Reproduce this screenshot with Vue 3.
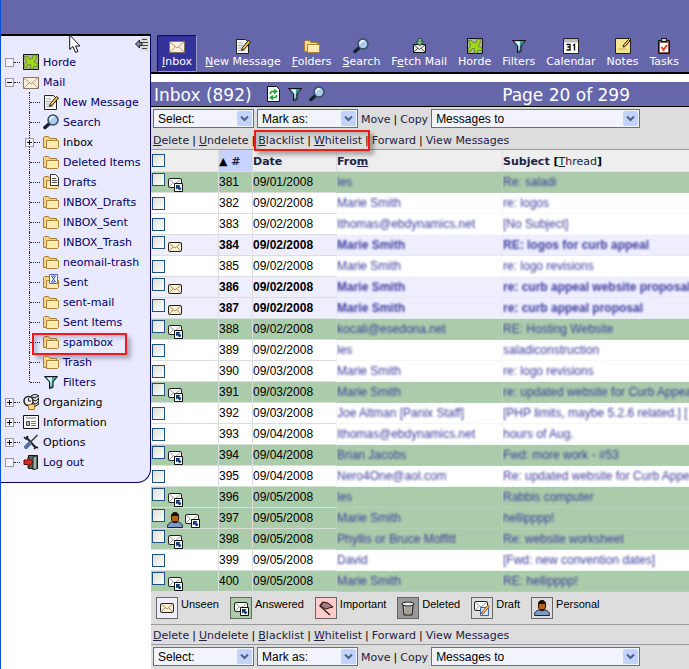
<script setup>
import { ref } from 'vue'

const tools = [
  { key: 'I', rest: 'nbox', icon: 'mail', active: true },
  { key: 'N', rest: 'ew Message', icon: 'compose' },
  { key: 'F', rest: 'olders', icon: 'folder' },
  { key: 'S', rest: 'earch', icon: 'search' },
  { pre: 'F', key: 'e', rest: 'tch Mail', icon: 'fetch' },
  { rest: 'Horde', icon: 'horde' },
  { rest: 'Filters', icon: 'filter' },
  { rest: 'Calendar', icon: 'calendar' },
  { rest: 'Notes', icon: 'note' },
  { rest: 'Tasks', icon: 'task' }
]

const tree = [
  { label: 'Horde', icon: 'horde', toggle: 'none' },
  { label: 'Mail', icon: 'mail', toggle: 'minus' },
  { label: 'New Message', icon: 'compose', child: true },
  { label: 'Search', icon: 'search', child: true },
  { label: 'Inbox', icon: 'folder', child: true, toggle: 'plus', dark: true },
  { label: 'Deleted Items', icon: 'folder', child: true },
  { label: 'Drafts', icon: 'drafts', child: true },
  { label: 'INBOX_Drafts', icon: 'folder', child: true },
  { label: 'INBOX_Sent', icon: 'folder', child: true },
  { label: 'INBOX_Trash', icon: 'folder', child: true },
  { label: 'neomail-trash', icon: 'folder', child: true },
  { label: 'Sent', icon: 'sent', child: true },
  { label: 'sent-mail', icon: 'folder', child: true },
  { label: 'Sent Items', icon: 'folder', child: true },
  { label: 'spambox', icon: 'folder', child: true, marked: true },
  { label: 'Trash', icon: 'folder', child: true },
  { label: 'Filters', icon: 'filter', child: true, last: true },
  { label: 'Organizing', icon: 'organize', toggle: 'plus', dark: true },
  { label: 'Information', icon: 'info', toggle: 'plus', dark: true },
  { label: 'Options', icon: 'options', toggle: 'plus', dark: true },
  { label: 'Log out', icon: 'logout', toggle: 'none' }
]

const row = (n, date, from, subject, kind = '', icons = []) => ({ n, date: `09/${date}/2008`, from, subject, kind, icons })
const a = ['answered']
const u = ['unseen']
const messages = ref([
  row(381, '01', 'les', 'Re: saladi', 'answered', a),
  row(382, '02', 'Marie Smith', 're: logos'),
  row(383, '02', 'lthomas@ebdynamics.net', '[No Subject]'),
  row(384, '02', 'Marie Smith', 'RE: logos for curb appeal', 'unseen', u),
  row(385, '02', 'Marie Smith', 're: logo revisions'),
  row(386, '02', 'Marie Smith', 're: curb appeal website proposal', 'unseen', u),
  row(387, '02', 'Marie Smith', 're: curb appeal proposal', 'unseen', u),
  row(388, '02', 'kocali@esedona.net', 'RE: Hosting Website', 'answered', a),
  row(389, '02', 'les', 'saladiconstruction'),
  row(390, '03', 'Marie Smith', 're: logo revisions'),
  row(391, '03', 'Marie Smith', 're: updated website for Curb Appeal', 'answered', a),
  row(392, '03', 'Joe Altman [Panix Staff]', '[PHP limits, maybe 5.2.6 related.] ['),
  row(393, '04', 'lthomas@ebdynamics.net', 'hours of Aug.'),
  row(394, '04', 'Brian Jacobs', 'Fwd: more work - #53', 'answered', a),
  row(395, '04', 'Nero4One@aol.com', 'Re: updated website for Curb Appeal'),
  row(396, '05', 'les', 'Rabbis computer', 'answered', a),
  row(397, '05', 'Marie Smith', 'hellipppp!', 'answered', ['person', 'answered']),
  row(398, '05', 'Phyllis or Bruce Moffitt', 'Re: website worksheet', 'answered', a),
  row(399, '05', 'David', '[Fwd: new convention dates]'),
  row(400, '05', 'Marie Smith', 'RE: hellipppp!', 'answered', a)
])

const legend = [
  { label: 'Unseen', icon: 'unseen' },
  { label: 'Answered', icon: 'answered' },
  { label: 'Important', icon: 'important' },
  { label: 'Deleted', icon: 'deleted' },
  { label: 'Draft', icon: 'draft' },
  { label: 'Personal', icon: 'person' }
]
</script>

<template>
  <svg class="sprites" aria-hidden="true">
    <symbol id="mail" viewBox="0 0 16 16">
      <path d="M.5 3.500h15v11H.5z" fill="#fbeedd" stroke="#8a7260" />
      <path d="M1 4l7 6 7-6M1 14l5-5M15 14l-5-5" fill="none" stroke="#b59a80" />
    </symbol>
    <symbol id="compose" viewBox="0 0 16 16">
      <path d="M1.500 1.500h9l3 3v11h-12z" fill="#f6f6f6" stroke="#222" />
      <path d="M3 5h5M3 7.500h5M3 10h4M3 12.500h7" stroke="#aaa" />
      <path d="M13.500 2.500l2 1.500-6 7-3 1.500 1-3z" fill="#ffc83a" stroke="#111" />
    </symbol>
    <symbol id="search" viewBox="0 0 16 16">
      <path d="M6.500 9.500L2 13.500" stroke="#16202c" stroke-width="3.500" stroke-linecap="round" />
      <circle cx="10" cy="6" r="5" fill="#a9cdec" stroke="#3c4a5c" stroke-width="1.500" />
      <path d="M7 6a3 3 0 0 1 4-3" fill="none" stroke="#f4fbff" stroke-width="1.500" />
    </symbol>
    <symbol id="folder" viewBox="0 0 16 16">
      <path d="M.5 13.500v-10l1-1h4l1.500 2h6.500v9z" fill="#f3d68a" stroke="#a87a32" />
      <path d="M3.500 6.500h12v7l-1 1h-11z" fill="#ffebb0" stroke="#b08238" />
      <path d="M4.500 7.500h10" stroke="#fffbe6" />
    </symbol>
    <symbol id="drafts" viewBox="0 0 16 16">
      <use href="#folder" />
      <path d="M7.500.500h5l3 3v8h-8z" fill="#fff" stroke="#333" />
      <path d="M9 4.500h4M9 6.500h5M9 8.500h5" stroke="#555" />
    </symbol>
    <symbol id="sent" viewBox="0 0 16 16">
      <use href="#folder" />
      <path d="M6.500.500h8v9h-8z" fill="#fff" stroke="#5a62c8" />
      <path d="M8.500 2l4 6M12.500 2l-4 6M8.500 2h4M8.500 8h4" fill="none" stroke="#4650b8" />
    </symbol>
    <symbol id="fetch" viewBox="0 0 16 16">
      <path d="M2.500 6.500h12v8h-12z" fill="#eee" stroke="#111" />
      <path d="M3 7l5.500 4.500L14 7M3 14l4-4M14 14l-4-4" fill="none" stroke="#555" />
      <path d="M7 .500h3.500v3h2L8.700 8 5 3.500h2z" fill="#79b58a" stroke="#245a38" />
    </symbol>
    <symbol id="horde" viewBox="0 0 16 16">
      <path d="M.5.500h15v15H.5z" fill="#b4b2a2" stroke="#111" />
      <path d="M1 3l3-1 2 2.500L9 5l1.500-4h3L13 5l-2 3 4 2v3l-4-1-1 3H7l1-4-3-.5-1.500 3L1 13v-2l2.500-3L3 5.500z" fill="#9bdc16" stroke="#50701c" stroke-width=".7" />
    </symbol>
    <symbol id="filter" viewBox="0 0 16 16">
      <path d="M1.500 2.500h13L10 8v5.500l-3.500 1V8z" fill="#3f9ba0" stroke="#111" />
      <path d="M4 3.500h5l-.5 8-1 .5V8z" fill="#e8ffff" />
    </symbol>
    <symbol id="calendar" viewBox="0 0 16 16">
      <path d="M.5.500h15v15H.5z" fill="#fff" stroke="#222" />
      <path d="M1 1h14v3.500H1z" fill="#bbb" />
      <path d="M3.500 6.500h3.500v5.500H3.500M4.500 9h2.500M10 7.500l1.500-1v6" fill="none" stroke="#111" stroke-width="1.400" />
    </symbol>
    <symbol id="note" viewBox="0 0 16 16">
      <path d="M.5.500h15v15H.5z" fill="#f4e68c" stroke="#222" />
      <path d="M13.500 1.500l1.500 1.500-5 5.500-2 .5.500-2z" fill="#ffc93a" stroke="#222" />
      <path d="M3 11h8" stroke="#c8b658" />
    </symbol>
    <symbol id="task" viewBox="0 0 16 16">
      <path d="M2.500 2.500h11v13h-11z" fill="#8b5a4a" stroke="#111" />
      <path d="M4 5h8v9H4z" fill="#fff" />
      <path d="M5.500.500h5v3h-5z" fill="#ccc" stroke="#111" />
      <path d="M5.500 9l2 3 3.500-5" fill="none" stroke="#e0402c" stroke-width="2" />
    </symbol>
    <symbol id="refresh" viewBox="0 0 16 16">
      <path d="M2.500.500h9l3 3v12h-12z" fill="#f2fff2" stroke="#111" />
      <path d="M5.500 8V6.500l1-1H11M9 3.500l2.500 2L9 7.500M11.500 9v1.500l-1 1H6M8 9.500l-2.500 2 2.500 2" fill="none" stroke="#17a233" stroke-width="1.600" />
    </symbol>
    <symbol id="organize" viewBox="0 0 16 16">
      <path d="M8 2l4-2 4 2v2l-1 1 1 1-1 2 1 2-5 3-4-2z" fill="#ddd" stroke="#111" />
      <path d="M9 3l3 1 3-2M10 6l3 1 2-2M10 9l3 1 2-2" fill="none" stroke="#222" />
      <circle cx="5.500" cy="7" r="4.500" fill="#eee" stroke="#222" stroke-width="1.500" />
      <path d="M5.500 4v3H8" fill="none" stroke="#222" />
      <path d="M5.500 10.500h6v5h-6z" fill="#ffd87a" stroke="#a4752a" />
    </symbol>
    <symbol id="info" viewBox="0 0 16 16">
      <path d="M.5 1.500h15v13H.5z" fill="#fff" stroke="#111" />
      <path d="M3 4h10M8 7.500h5M8 9.500h5M8 11.500h5" stroke="#777" />
      <path d="M3.500 7.500h3v4h-3z" fill="#bbb" stroke="#444" />
    </symbol>
    <symbol id="options" viewBox="0 0 16 16">
      <path d="M3 3l10 11" stroke="#222" stroke-width="2" />
      <path d="M1 3l2 2 2-3M11 15l2-2 2 1" fill="none" stroke="#222" stroke-width="1.500" />
      <path d="M14.500 1L7 8.500" stroke="#333" stroke-width="1.500" />
      <path d="M6.500 9.500L3 13" stroke="#52719c" stroke-width="4" stroke-linecap="round" />
    </symbol>
    <symbol id="logout" viewBox="0 0 16 16">
      <path d="M5.500 1.500h9v13h-9z" fill="#4a6a60" stroke="#111" />
      <path d="M10 3l4-1.500v13L10 16z" fill="#9ab5a4" stroke="#222" />
      <path d="M1 6h4V3l5 5-5 5.500V10.500H1z" fill="#d6281e" stroke="#5a0b08" />
    </symbol>
    <symbol id="unseen" viewBox="0 0 16 16">
      <rect x="1.500" y="3.500" width="13" height="9" rx="1" fill="#fff0d0" stroke="#222" />
      <path d="M2 4l6 5 6-5M2 12l4-4M14 12l-4-4" fill="none" stroke="#a08b70" />
    </symbol>
    <symbol id="answered" viewBox="0 0 16 16">
      <rect x="1.500" y="2.500" width="13" height="9" rx="1" fill="#fff" stroke="#222" />
      <path d="M2 3l6 5 6-5M2 11l4-4" fill="none" stroke="#999" />
      <path d="M7.500 7.500h8v8h-8z" fill="#fff" stroke="#111" />
      <path d="M9 9h4.500l-1.300 1.300 2.300 2.300-1.900 1.900-2.300-2.300L9 13.500z" fill="#123c78" />
    </symbol>
    <symbol id="important" viewBox="0 0 16 16">
      <path d="M5 2l5 1 5 4-4 1-3 1-6-3z" fill="#a77b84" stroke="#2a1518" />
      <path d="M5 2L2 6l10 9" fill="none" stroke="#3a2420" stroke-width="1.500" />
    </symbol>
    <symbol id="deleted" viewBox="0 0 16 16">
      <path d="M3 5h10l-1 10H4z" fill="#ccc8b8" stroke="#111" />
      <ellipse cx="8" cy="4" rx="6" ry="2" fill="#eee" stroke="#111" />
      <path d="M6 1.500h4M6 7v7M8 7v7M10 7v7" stroke="#777" />
    </symbol>
    <symbol id="draft" viewBox="0 0 16 16">
      <rect x=".5" y="1.500" width="13" height="9" rx="1" fill="#fff" stroke="#222" />
      <path d="M1 2l6 5 6-5M1 10l4-4" fill="none" stroke="#999" />
      <path d="M6.500 7.500h8v8h-8z" fill="#cfe4ff" stroke="#3a62a4" />
      <path d="M14 5l1.500 1.500-6 7-2 .5.500-2z" fill="#ffc85a" stroke="#9a5020" />
    </symbol>
    <symbol id="person" viewBox="0 0 16 16">
      <path d="M.5 15.500c0-4 2-5 5-5.500h5c3 .5 5 1.500 5 5.500z" fill="#7d9cc4" stroke="#17263c" />
      <path d="M4.500 4c0-5 7-5 7 0v3c0 5-7 5-7 0z" fill="#b86418" stroke="#2a1208" />
      <path d="M4 5c0-6 8-6 8 0l-1-1H5z" fill="#15100c" />
      <path d="M6 9h4v2H6z" fill="#33170a" />
    </symbol>
  </svg>

  <div class="page">
    <aside class="side">
      <div class="side-top"></div>
      <nav class="panel" aria-label="Applications">
        <button class="collapse" aria-label="Hide menu">
          <svg viewBox="0 0 14 14">
            <path d="M5 0h9v14H5z" fill="#ddd" />
            <path d="M7 2.500h5M7 5.500h6M7 8.500h6M7 11.500h5" stroke="#444" />
            <path d="M.5 7l4-4v2.500H7v3H4.500V11z" fill="#8888b8" stroke="#222" />
          </svg>
        </button>
        <svg class="pointer" viewBox="0 0 12 20" aria-hidden="true">
          <path d="M.7 1v14.500l3.300-3 2.500 6 2.500-1-2.500-5.500H11z" fill="#fff" stroke="#111" />
        </svg>
        <ul class="tree">
          <li v-for="t in tree" :key="t.label + t.icon + (t.child ? 1 : 0)" :class="{ child: t.child, last: t.last, marked: t.marked, knot: t.child && t.toggle }">
            <span v-if="t.child" class="trunk"></span>
            <button v-if="t.toggle" class="toggle" :class="t.toggle" :aria-label="'Toggle ' + t.label"></button>
            <span class="branch"></span>
            <svg class="icon"><use :href="'#' + t.icon" /></svg>
            <a href="#" :class="{ dark: t.dark }">{{ t.label }}</a>
          </li>
        </ul>
      </nav>
    </aside>

    <main class="main">
      <nav class="toolbar" aria-label="Mail">
        <a v-for="t in tools" :key="t.icon" href="#" :class="{ active: t.active }">
          <svg class="icon"><use :href="'#' + t.icon" /></svg>
          <span>{{ t.pre }}<u v-if="t.key">{{ t.key }}</u>{{ t.rest }}</span>
        </a>
      </nav>

      <header class="title">
        <h1>Inbox (892)</h1>
        <a href="#" aria-label="Refresh"><svg class="icon"><use href="#refresh" /></svg></a>
        <a href="#" aria-label="Filters"><svg class="icon"><use href="#filter" /></svg></a>
        <a href="#" aria-label="Search"><svg class="icon"><use href="#search" /></svg></a>
        <h2>Page 20 of 299</h2>
      </header>

      <template v-for="place in ['top', 'bottom']" :key="place">
        <table v-if="place === 'bottom'" class="list">
          <colgroup><col class="c-flag"><col class="c-num"><col class="c-date"><col class="c-from"><col></colgroup>
          <thead>
            <tr>
              <th><div class="flags"><input type="checkbox" aria-label="Select all"></div></th>
              <th class="sorted"><span class="up">▲</span> #</th>
              <th>Date</th>
              <th>Fro<u>m</u></th>
              <th>Subject <b>[</b><a href="#"><u>T</u>hread</a><b>]</b></th>
            </tr>
          </thead>
          <tbody>
            <tr v-for="m in messages" :key="m.n" :class="m.kind">
              <td>
                <div class="flags" :class="{ top: m.icons.length }">
                  <input type="checkbox" :aria-label="'Select message ' + m.n">
                  <svg v-for="i in m.icons" :key="i" class="icon"><use :href="'#' + i" /></svg>
                </div>
              </td>
              <td>{{ m.n }}</td>
              <td>{{ m.date }}</td>
              <td class="veiled"><span>{{ m.from }}</span></td>
              <td class="veiled"><span>{{ m.subject }}</span></td>
            </tr>
          </tbody>
        </table>
        <ul v-if="place === 'bottom'" class="legend">
          <li v-for="l in legend" :key="l.label">
            <span class="swatch" :class="l.icon"><svg class="icon"><use :href="'#' + l.icon" /></svg></span>
            {{ l.label }}
          </li>
        </ul>
        <div class="actions" :class="place">
          <div class="selects">
            <span class="drop"><select aria-label="Select"><option>Select:</option></select><svg viewBox="0 0 15 15"><path d="M4 5.500l3.500 3.500L11 5.500" /></svg></span>
            <span class="drop"><select aria-label="Mark as"><option>Mark as:</option></select><svg viewBox="0 0 15 15"><path d="M4 5.500l3.500 3.500L11 5.500" /></svg></span>
            <span class="links"><a href="#">Move</a><i>|</i><a href="#">Copy</a></span>
            <span class="drop wide"><select aria-label="Messages to"><option>Messages to</option></select><svg viewBox="0 0 15 15"><path d="M4 5.500l3.500 3.500L11 5.500" /></svg></span>
          </div>
          <div class="links commands">
            <a href="#"><u>D</u>elete</a><i>|</i>
            <a href="#"><u>U</u>ndelete</a><i>|</i>
            <span class="links pair">
              <a href="#"><u>B</u>lacklist</a><i>|</i>
              <a href="#"><u>W</u>hitelist</a><i>|</i>
            </span>
            <a href="#">Forward</a><i>|</i>
            <a href="#">View Messages</a>
          </div>
        </div>
      </template>
    </main>
  </div>
</template>

<style>
body { margin: 0; background: #fff; overflow: hidden; }
</style>

<style scoped>
*, *::before, *::after { box-sizing: border-box; }
.sprites { display: none; }
.page {
  display: grid;
  grid-template-columns: 150px minmax(0, 1fr);
  min-height: 100vh;
  border-left: 1px solid #0c50d8;
  font: 11px/14px "DejaVu Sans", Verdana, sans-serif;
  color: #000;
}
a { color: inherit; text-decoration: none; }
ul { list-style: none; margin: 0; padding: 0; }
button { padding: 0; border: 0; background: none; }
.icon { width: 16px; height: 16px; flex: none; }

.side-top { height: 34px; background: #6666aa; }
.panel {
  position: relative;
  padding: 16px 0 10px;
  background: #e9e9ff;
  border: solid #000066;
  border-width: 2px 1px 1px 0;
  border-top-color: #000;
  border-bottom-right-radius: 14px;
}
.collapse { position: absolute; top: 1px; right: 1px; width: 14px; height: 14px; }
.collapse svg { display: block; }
.pointer { position: absolute; top: -2px; left: 68px; width: 12px; height: 20px; }
.tree li { position: relative; display: flex; align-items: center; height: 20px; padding-left: 4px; }
.tree a { margin-left: 4px; padding-top: 2px; color: #000066; white-space: nowrap; }
.tree a.dark { color: #000; }
.tree .icon { margin-left: 3px; }
.toggle { position: relative; width: 9px; height: 9px; border: 1px solid #999; background: #f4f4ff; flex: none; }
.toggle.plus::before, .toggle.minus::before { content: ""; position: absolute; left: 1px; top: 3px; width: 5px; height: 1px; background: #000; }
.toggle.plus::after { content: ""; position: absolute; left: 3px; top: 1px; width: 1px; height: 5px; background: #000; }
.branch { width: 6px; border-top: 1px dotted #222; }
.tree .child { padding-left: 28px; }
.trunk { width: 1px; align-self: stretch; border-left: 1px dotted #222; }
.child .branch { width: 10px; }
.last .trunk { height: 10px; align-self: flex-start; }
.knot .toggle { margin-left: -5px; }
.knot .branch { width: 6px; }
.marked::after {
  content: "";
  position: absolute;
  left: 31px;
  top: 1px;
  width: 95px;
  height: 22px;
  border: 2px solid #f01818;
  box-shadow: 4px 4px 4px rgba(60, 60, 90, .35), inset 3px 3px 4px rgba(60, 60, 90, .25);
  pointer-events: none;
}

.main { background: #ddd; }
.toolbar {
  display: flex;
  gap: 5px;
  padding: 35px 6px 0;
  background: #6666aa;
  border-bottom: 2px solid #000;
  color: #fff;
}
.toolbar a {
  display: flex;
  flex-direction: column;
  align-items: center;
  gap: 1px;
  padding: 2px;
  border: 1px solid transparent;
  border-radius: 2px;
  white-space: nowrap;
}
.toolbar a.active { padding: 2px 4px; background: #333399; border-color: #111144 #9999cc #9999cc #111144; }
.title {
  display: grid;
  grid-template-columns: auto auto auto auto 1fr;
  align-items: center;
  gap: 6px;
  height: 33px;
  padding: 0 3px;
  background: #6666aa;
  border-top: 8px solid #fff;
  border-bottom: 1px solid #000;
  color: #fff;
}
.title h1, .title h2 { margin: 0; padding-top: 2px; font-size: 17px; font-weight: normal; line-height: 22px; white-space: nowrap; }
.title h1 { margin-right: 7px; }
.title .icon { display: block; }
.title h2 { padding-right: 56px; text-align: right; }

.actions { display: flex; flex-direction: column; border-bottom: 1px solid #999; }
.actions.bottom { flex-direction: column-reverse; border: 0; }
.bottom .commands { border: solid #999; border-width: 1px 0; height: 21px; }
.selects { display: flex; align-items: center; gap: 3px; padding: 2px; }
.drop { position: relative; width: 101px; height: 19px; }
.drop.wide { width: 209px; }
.drop select {
  display: block;
  width: 100%;
  height: 19px;
  padding: 0 18px 0 4px;
  appearance: none;
  border: 1px solid #6666aa;
  border-radius: 0;
  background: #f3f3fc;
  color: #000;
  font: 12px "Liberation Sans", Arial, sans-serif;
}
.drop svg { position: absolute; top: 2px; right: 2px; width: 15px; height: 15px; background: #c2d3fc; border-radius: 2px; pointer-events: none; }
.drop path { fill: none; stroke: #4d6185; stroke-width: 2; }
.links { display: flex; align-items: center; gap: 3px; color: #222244; white-space: nowrap; }
.links i { font-style: normal; color: #000; }
.selects .links { padding-top: 2px; }
.commands { height: 19px; padding: 2px 2px 0; }
.pair { position: relative; }
.top .pair::after {
  content: "";
  position: absolute;
  inset: -4px -1px -3px -4px;
  border: 2px solid #f01818;
  box-shadow: 4px 4px 4px rgba(60, 60, 60, .4), inset 3px 3px 4px rgba(60, 60, 60, .25);
  pointer-events: none;
}

.list { width: 100%; table-layout: fixed; border-collapse: separate; border-spacing: 0; }
.c-flag { width: 67px; }
.c-num { width: 34px; }
.c-date { width: 84px; }
.c-from { width: 166px; }
.list th, .list td { padding: 0; overflow: hidden; white-space: nowrap; text-align: left; border-bottom: 1px solid #ddd; }
.list th + th, .list td + td { border-left: 1px solid #ddd; }
.list th { height: 22px; background: #eee; color: #222244; font-size: 11px; }
.list th + th { padding-top: 2px; }
.list th a { font-weight: normal; }
.list th b { color: #000; }
.list th.sorted { background: #c6d2ff; }
.up { color: #000; }
.list td { height: 21px; background: #fff; font: 12px/20px "Liberation Sans", Arial, sans-serif; }
.answered td { background: #aaccaa; }
.unseen td { background: #eeeeff; font-weight: bold; }
.list td.veiled { border-color: #f6f6f6; color: #3c3c9c; }
.list .answered td.veiled { border-color: #b4d0b4; }
.list .unseen td.veiled { border-color: #e8e8f6; }
.veiled span { filter: blur(1px); }
.flags { display: flex; align-items: center; height: 20px; gap: 1px; padding-left: 1px; }
.flags input {
  width: 13px;
  height: 13px;
  margin: 0 1px 0 0;
  appearance: none;
  border: 1px solid #1c5180;
  background: linear-gradient(135deg, #dcdcd7, #fff);
  flex: none;
}
.flags.top input { align-self: flex-start; margin-top: 1px; }
.flags .icon { align-self: flex-end; }

.legend { display: flex; gap: 11px; height: 32px; padding: 5px; font: 11px/15px "Liberation Sans", Arial, sans-serif; }
.legend li { display: flex; gap: 3px; white-space: nowrap; }
.swatch { display: grid; place-items: center; width: 22px; height: 22px; border: 1px solid #666; background: #ddd; }
.swatch.unseen { background: #eeeeff; }
.swatch.answered { background: #aaccaa; }
.swatch.important { background: #ffcccc; }
.swatch.deleted { background: #999; }
</style>
